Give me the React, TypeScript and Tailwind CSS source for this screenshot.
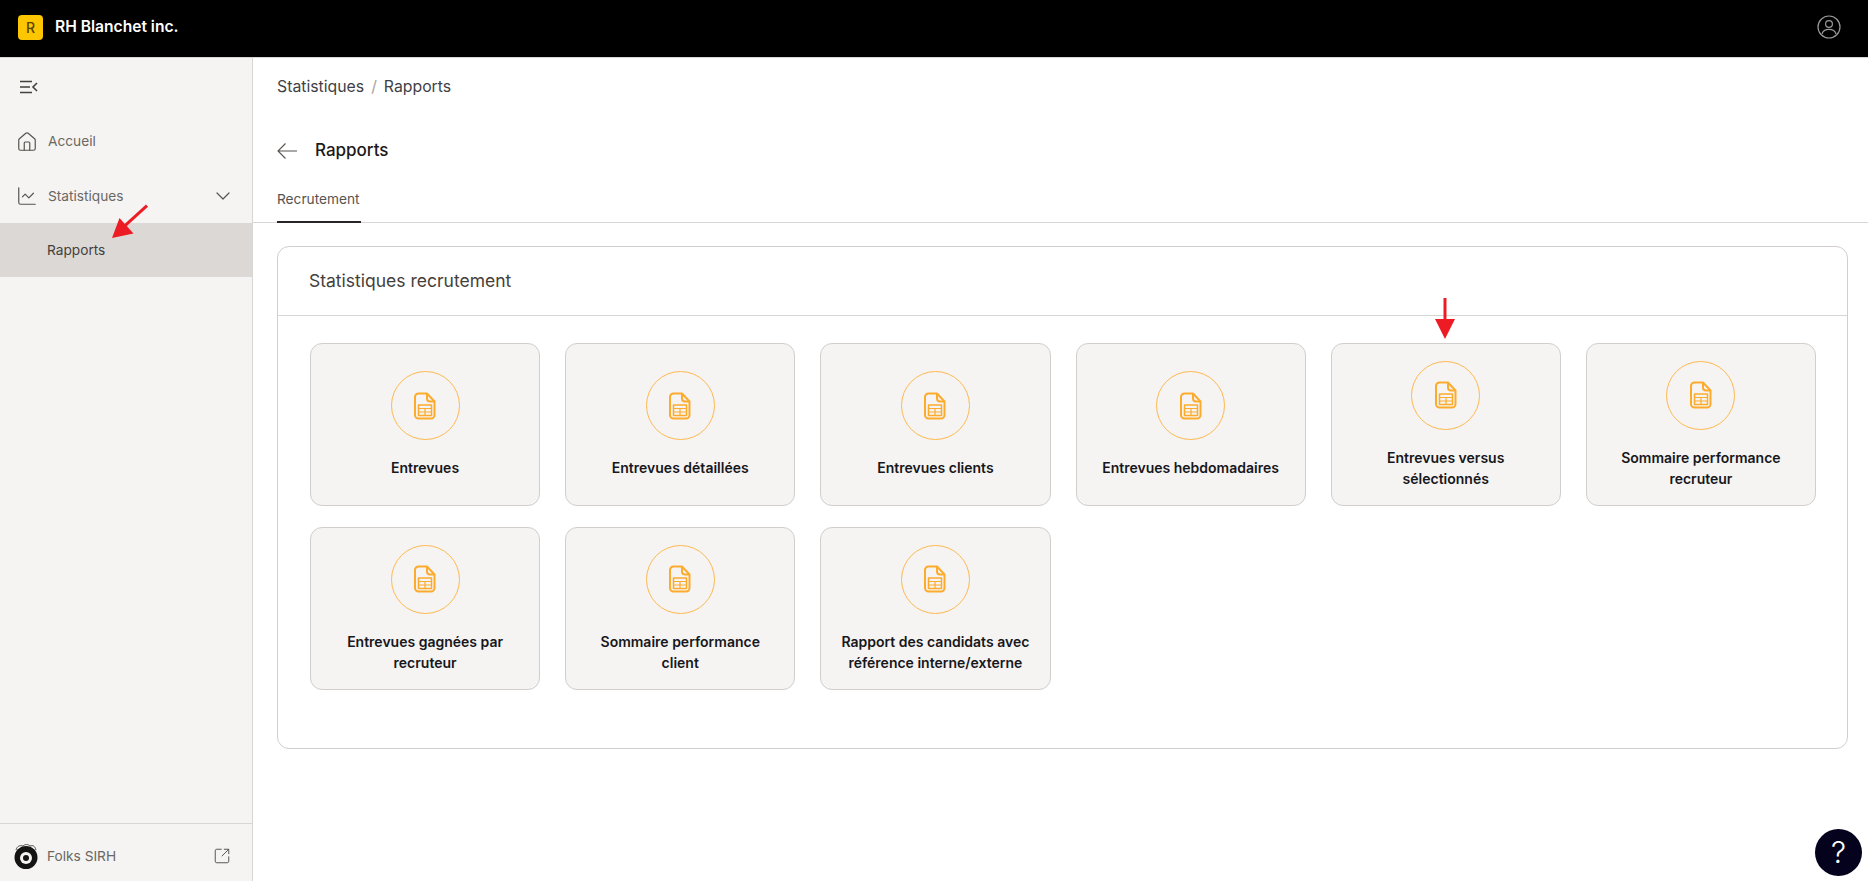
import React from 'react';
import { ChevronDown, ChartLine, House, SquareArrowOutUpRight } from 'lucide-react';

const reports = [
  'Entrevues',
  'Entrevues détaillées',
  'Entrevues clients',
  'Entrevues hebdomadaires',
  'Entrevues versus sélectionnés',
  'Sommaire performance recruteur',
  'Entrevues gagnées par recruteur',
  'Sommaire performance client',
  'Rapport des candidats avec référence interne/externe',
];

const ReportIcon = () => (
  <svg width="22" height="28" viewBox="0 0 22 28" fill="none" stroke="#fdab2c" strokeWidth="2" strokeLinejoin="round">
    <path d="M4.500 1.500h8.500l7.500 8v13.500a3.500 3.500 0 0 1-3.500 3.500H4.500a3.500 3.500 0 0 1-3.500-3.500V5a3.500 3.500 0 0 1 3.500-3.500z" />
    <path d="M13 1.500v5a3 3 0 0 0 3 3h4.500" />
    <rect x="4.500" y="13" width="13" height="10.500" strokeWidth="1.500" />
    <path d="M4.500 16.500h13M4.500 20h13M11 16.500v7" strokeWidth="1.200" />
  </svg>
);

const RedArrow = ({ className }: { className: string }) => (
  <svg className={`absolute ${className}`} width="20" height="42" viewBox="0 0 20 42">
    <path d="M8.500 0h3v22h-3z" fill="#ed1c24" />
    <path d="M0 21h20L10 41z" fill="#ed1c24" />
  </svg>
);

const ReportCard = ({ label }: { label: string }) => (
  <div className="h-[163px] bg-[#f5f4f2] border border-[#d2cecb] rounded-xl flex flex-col items-center justify-center gap-[17px]">
    <div className="w-[69px] h-[69px] shrink-0 rounded-full border border-[#fdb94f] flex items-center justify-center">
      <ReportIcon />
    </div>
    <div className="max-w-[190px] text-center text-[14px] leading-[21px] font-semibold text-[#17171c]">{label}</div>
  </div>
);

const App = () => {
  return (
    <div className="relative h-[881px] w-full overflow-hidden bg-white flex flex-col font-['Inter',sans-serif]">
      {/* Top bar */}
      <header className="h-[58px] shrink-0 bg-black border-b border-[#d8d6d3] flex items-center justify-between pl-[18px] pr-[27px] pb-[3px]">
        <div className="flex items-center gap-3">
          <div className="w-[25px] h-[25px] rounded bg-[#fdc600] flex items-center justify-center text-[14px] font-medium text-[#5a4300]">R</div>
          <span className="text-white text-[15.6px] font-semibold">RH Blanchet inc.</span>
        </div>
        <svg width="24" height="24" viewBox="0 0 24 24" fill="none" stroke="#9a9a9a" strokeWidth="1.2">
          <circle cx="12" cy="12" r="11" />
          <circle cx="12" cy="9" r="3.400" />
          <path d="M5 19c1-3.500 4-4.600 7-4.600s6 1.100 7 4.600" />
        </svg>
      </header>

      <div className="flex flex-1 min-h-0">
        {/* Sidebar */}
        <aside className="w-[253px] shrink-0 bg-[#f5f4f2] border-r border-[#d8d6d3] flex flex-col">
          <div className="h-[56px] pl-5 pt-[2px] flex items-center">
            <svg width="18" height="14" viewBox="0 0 18 14" fill="none" stroke="#44403c" strokeWidth="1.600">
              <path d="M0 1.500h12M0 7h10M0 12.500h12M17 3l-4 4 4 4" />
            </svg>
          </div>
          <div className="h-[55px] flex items-center gap-[10px] pl-[16px] text-[13.7px] text-[#6b6763]">
            <House size={22} strokeWidth={1.300} className="text-[#57534e]" />
            Accueil
          </div>
          <div className="h-[54px] flex items-center gap-[10px] pl-[16px] pr-[17px] text-[13.7px] text-[#6b6763]">
            <ChartLine size={22} strokeWidth={1.300} className="text-[#57534e]" />
            <span className="flex-1">Statistiques</span>
            <ChevronDown size={24} strokeWidth={1.200} className="text-[#57534e]" />
          </div>
          <div className="h-[54px] bg-[#dcd8d5] flex items-center pl-[47px] text-[13.7px] text-[#44403c]">Rapports</div>
          <div className="flex-1" />
          <div className="h-[58px] border-t border-[#d8d6d3] flex items-center justify-between pl-[14px] pr-[21px] pt-[7px]">
            <div className="flex items-center gap-[9px] text-[13.7px] text-[#6b6763]">
              <svg width="24" height="26" viewBox="0 0 24 26">
                <path d="M2 7c1-4 4-5 7-4 2-2 5-2 7 0 3-1 5 0 6 4" fill="none" stroke="#3f3f3f" strokeWidth="0.900" />
                <circle cx="12" cy="14.500" r="11.500" fill="#141414" />
                <circle cx="12" cy="15" r="6" fill="#f5f4f2" />
                <circle cx="12" cy="15" r="3" fill="#141414" />
              </svg>
              Folks SIRH
            </div>
            <SquareArrowOutUpRight size={18} strokeWidth={1.300} className="text-[#57534e]" />
          </div>
        </aside>

        {/* Main */}
        <main className="flex-1 min-w-0 flex flex-col">
          <div className="h-[58px] pl-6 flex items-center text-[15.8px] text-[#3f3f46]">
            Statistiques <span className="mx-[7px] text-[#a8a29e]">/</span> Rapports
          </div>
          <div className="h-[68px] pl-6 pt-[2px] flex items-center gap-[18px] text-[#1c1917]">
            <svg width="20" height="16" viewBox="0 0 20 16" fill="none" stroke="#57534e" strokeWidth="1.100">
              <path d="M20 8H1M8.500 0.500 1 8l7.500 7.500" />
            </svg>
            <span className="text-[17px] font-medium">Rapports</span>
          </div>
          <div className="h-[39px] pl-6 border-b border-[#d8d6d3] flex">
            <div className="h-[39px] w-[84px] border-b-2 border-[#292524] text-[13.7px] leading-[20px] text-[#57534e] pt-[5px]">Recrutement</div>
          </div>

          <div className="pt-[23px] pl-6 pr-[20px]">
            <section className="h-[503px] border border-[#d2cecb] rounded-xl">
              <div className="h-[69px] pl-[31px] border-b border-[#d8d6d3] flex items-center text-[17.5px] text-[#44403c]">
                Statistiques recrutement
              </div>
              <div className="grid grid-cols-6 gap-x-[25px] gap-y-[21px] pl-8 pr-[31px] pt-[27px]">
                {reports.map((r) => (
                  <ReportCard key={r} label={r} />
                ))}
              </div>
            </section>
          </div>
        </main>
      </div>

      {/* Annotation arrows */}
      <RedArrow className="left-[1435px] top-[298px]" />
      <svg className="absolute left-[110px] top-[202px]" width="40" height="38" viewBox="0 0 40 38">
        <path d="M36 2.500l2 2.300-22 20-2-2.300z" fill="#ed1c24" />
        <path d="M2 36l7.500-20 14 15.500z" fill="#ed1c24" />
      </svg>

      {/* Help button */}
      <div className="absolute left-[1815px] top-[829px] w-[47px] h-[47px] rounded-full bg-[#04021c] flex items-center justify-center text-white text-[30px] font-light">?</div>
    </div>
  );
};

export default App;
